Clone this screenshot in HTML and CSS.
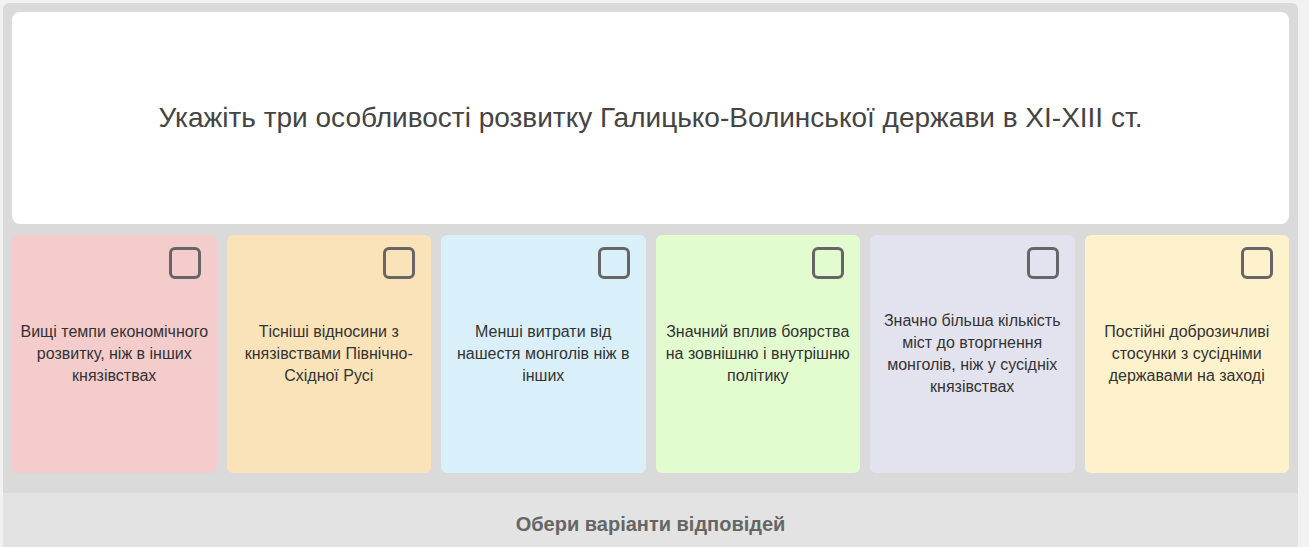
FILE: index.html
```html
<!DOCTYPE html>
<html lang="uk">
<head>
<meta charset="utf-8">
<link rel="stylesheet" href="styles.css">
</head>
<body>
<div class="frame">
  <div class="inner">
    <div class="question">Укажіть три особливості розвитку Галицько-Волинської держави в XI-XIII ст.</div>
    <div class="options">
      <div class="opt c1"><span class="box"></span><p>Вищі темпи економічного розвитку, ніж в інших князівствах</p></div>
      <div class="opt c2"><span class="box"></span><p>Тісніші відносини з князівствами Північно-Східної Русі</p></div>
      <div class="opt c3"><span class="box"></span><p>Менші витрати від нашестя монголів ніж в інших</p></div>
      <div class="opt c4"><span class="box"></span><p>Значний вплив боярства на зовнішню і внутрішню політику</p></div>
      <div class="opt c5"><span class="box"></span><p>Значно більша кількість міст до вторгнення монголів, ніж у сусідніх князівствах</p></div>
      <div class="opt c6"><span class="box"></span><p>Постійні доброзичливі стосунки з сусідніми державами на заході</p></div>
    </div>
  </div>
  <div class="footer">Обери варіанти відповідей</div>
</div>
</body>
</html>
```

FILE: styles.css
```css
html, body {
  margin: 0;
  padding: 0;
  background: #f2f2f2;
  height: 547px;
  overflow: hidden;
}
body {
  padding: 3px 11px 0 3px;
  font-family: "Liberation Sans", Arial, sans-serif;
}
.frame {
  background: #dadada;
  border-radius: 6px 6px 0 0;
  height: 544px;
  display: flex;
  flex-direction: column;
}
.inner {
  padding: 9px 9px 20px 9px;
  display: flex;
  flex-direction: column;
  gap: 11px;
}
.question {
  background: #fff;
  border-radius: 8px;
  height: 212px;
  display: flex;
  align-items: center;
  justify-content: center;
  text-align: center;
  font-size: 28px;
  color: #444;
}
.options {
  display: grid;
  grid-template-columns: repeat(6, 1fr);
  gap: 10px;
}
.opt {
  position: relative;
  height: 238px;
  border-radius: 6px;
  display: flex;
  align-items: center;
  justify-content: center;
  padding: 0 8px;
}
.opt p {
  margin: 0;
  text-align: center;
  font-size: 16px;
  line-height: 22px;
  color: #333;
}
.box {
  position: absolute;
  top: 12px;
  right: 16px;
  width: 26px;
  height: 26px;
  border: 3px solid #666;
  border-radius: 6px;
}
.c1 { background: #f4cccc; }
.c2 { background: #fae3b8; }
.c3 { background: #d9f0fa; }
.c4 { background: #e2fcd0; }
.c5 { background: #e3e3ef; }
.c6 { background: #fef2cc; }
.footer {
  flex: 1;
  background: #e3e3e3;
  display: flex;
  align-items: center;
  justify-content: center;
  padding-top: 8px;
  font-weight: bold;
  font-size: 20px;
  color: #666;
}
```
